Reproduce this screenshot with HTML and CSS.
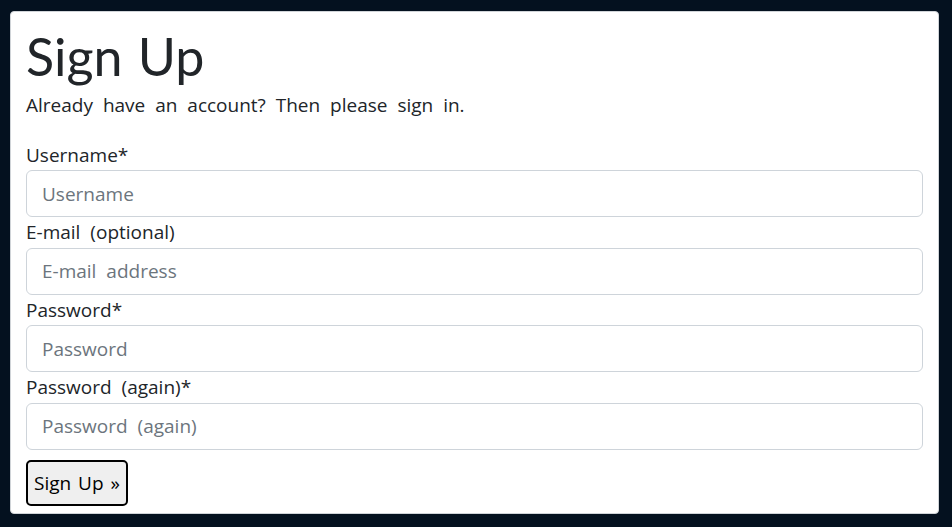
FILE: index.html
```html
<!DOCTYPE html>
<html>
<head>
<meta charset="utf-8">
<link rel="stylesheet" href="styles.css">
</head>
<body>
<main class="card">
  <h1 class="title">Sign Up</h1>
  <p class="lead">Already have an account? Then please sign in.</p>
  <form class="form">
    <label class="label">Username*</label>
    <input class="field" type="text" placeholder="Username">
    <label class="label">E-mail (optional)</label>
    <input class="field" type="text" placeholder="E-mail address">
    <label class="label">Password*</label>
    <input class="field" type="text" placeholder="Password">
    <label class="label">Password (again)*</label>
    <input class="field" type="text" placeholder="Password (again)">
    <button class="btn" type="button">Sign Up »</button>
  </form>
</main>
</body>
</html>
```

FILE: styles.css
```css
html, body {
  margin: 0;
  padding: 0;
  background: #04111f;
  height: 100%;
}
body {
  padding: 11px 13px 13px 10px;
  box-sizing: border-box;
  font-family: "Open Sans", "DejaVu Sans", sans-serif;
  color: #212529;
  word-spacing: 5px;
}
.card {
  background: #fff;
  border-radius: 4px;
  border: 1px solid #d0d4d8;
  height: 503px;
  box-sizing: border-box;
  padding: 14px 15px 0 15px;
}
.title {
  margin: 0;
  font-family: "Lato", sans-serif;
  font-size: 52px;
  font-weight: 400;
  line-height: 60px;
  color: #212529;
  word-spacing: 2px;
}
.lead {
  margin: 5px 0 21px 0;
  font-size: 19px;
  line-height: 28px;
}
.form {
  display: flex;
  flex-direction: column;
  align-items: stretch;
}
.label {
  font-size: 19px;
  line-height: 30.4px;
  display: block;
  height: 30.4px;
}
.field {
  height: 47px;
  box-sizing: border-box;
  border: 1px solid #ced4da;
  border-radius: 6px;
  padding: 0 15px;
  font-family: inherit;
  font-size: 19px;
  color: #212529;
  word-spacing: 5px;
  margin: 0;
}
.field::placeholder {
  color: #6c757d;
}
.btn {
  align-self: flex-start;
  margin-top: 10px;
  height: 46px;
  padding: 0 6px;
  border: 2px solid #000;
  border-radius: 5px;
  background: #efefef;
  font-family: inherit;
  font-size: 19px;
  color: #000;
  word-spacing: 2px;
}
```
